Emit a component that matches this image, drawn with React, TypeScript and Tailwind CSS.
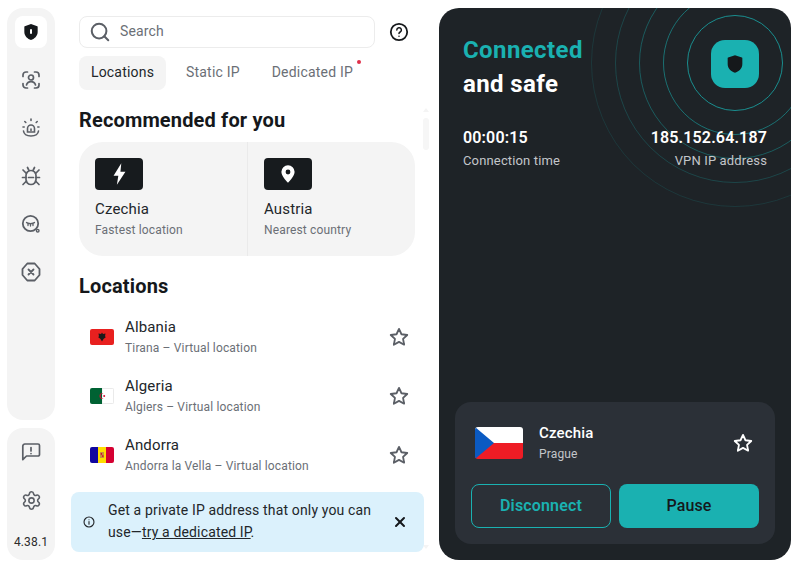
import { Search, Settings, X } from "lucide-react";

function Shield({ className }: { className?: string }) {
  return (
    <svg viewBox="0 0 24 24" className={className} fill="currentColor">
      <path d="M12 2.500 19.500 5c.4.100.5.400.5.800V12c0 5-4 8.300-8 9.600C8 20.300 4 17 4 12V5.800c0-.400.100-.700.500-.800L12 2.500Z" />
    </svg>
  );
}

function StarIcon({ className }: { className?: string }) {
  return (
    <svg viewBox="0 0 24 24" className={className} fill="none" stroke="currentColor" strokeWidth="2" strokeLinejoin="round">
      <path d="m12 3.200 2.700 5.800 6.300.8-4.600 4.300 1.200 6.300L12 17.300l-5.600 3.100 1.200-6.300L3 9.800l6.300-.8L12 3.200Z" />
    </svg>
  );
}

function FaceIcon() {
  return (
    <svg viewBox="0 0 20 20" className="w-5 h-5" fill="none" stroke="currentColor" strokeWidth="1.700" strokeLinecap="round">
      <path d="M2 6.500V5a3 3 0 0 1 3-3h1.500M13.500 2H15a3 3 0 0 1 3 3v1.500M18 13.500V15a3 3 0 0 1-3 3h-1.500M6.500 18H5a3 3 0 0 1-3-3v-1.500" />
      <circle cx="10" cy="7.500" r="2.500" />
      <path d="M5.500 15c.6-2.200 2.400-3.300 4.500-3.300s3.900 1.100 4.500 3.300" />
    </svg>
  );
}

function AlarmIcon() {
  return (
    <svg viewBox="0 0 20 20" className="w-5 h-5" fill="none" stroke="currentColor" strokeWidth="1.600" strokeLinecap="round">
      <path d="M6.500 14v-3.500a3.500 3.500 0 0 1 7 0V14Z" />
      <path d="M10 11v1.500M10 1v1.500M3.800 3.500l1 1M16.200 3.500l-1 1M2 9h1.200M16.800 9H18" />
      <path d="M2.500 13c.4 3 3.500 5 7.500 5s7.100-2 7.500-5" />
    </svg>
  );
}

function BugIcon() {
  return (
    <svg viewBox="0 0 20 20" className="w-5 h-5" fill="none" stroke="currentColor" strokeWidth="1.700" strokeLinecap="round">
      <rect x="5" y="4.500" width="10" height="14" rx="5" />
      <path d="M7.500 11.500h5M6.500 1.500 8 4.500M13.500 1.500 12 4.500M2 4l3.500 3.500M18 4l-3.500 3.500M1.500 11.500H5M18.500 11.500H15M2 18.500l3.500-3.500M18 18.500 14.500 15" />
    </svg>
  );
}

function LeakIcon() {
  return (
    <svg viewBox="0 0 20 20" className="w-5 h-5" fill="none" stroke="currentColor" strokeWidth="1.800" strokeLinecap="round">
      <circle cx="9.500" cy="9.500" r="7.700" />
      <path d="M5.500 8.500c1.200 1.400 6.800 1.400 8 0M7 9.500v2M9.500 10v2M12 9.500v2" strokeWidth="1.300" />
      <circle cx="16.700" cy="16.700" r="1.300" strokeWidth="1.400" />
    </svg>
  );
}

function BlockIcon() {
  return (
    <svg viewBox="0 0 20 20" className="w-5 h-5" fill="none" stroke="currentColor" strokeWidth="1.800" strokeLinecap="round" strokeLinejoin="round">
      <path d="M6.300 1.500h7.400l4.800 5.500v6l-4.800 5.500H6.300L1.500 13V7Z" />
      <path d="m7.500 7.500 5 5M12.500 7.500l-5 5" />
    </svg>
  );
}

function FeedbackIcon() {
  return (
    <svg viewBox="0 0 20 20" className="w-5 h-5" fill="none" stroke="currentColor" strokeWidth="1.700" strokeLinecap="round" strokeLinejoin="round">
      <path d="M4 2h13a1.500 1.500 0 0 1 1.500 1.500v9A1.500 1.500 0 0 1 17 14H5.500l-3.700 3.700V4A2 2 0 0 1 4 2Z" />
      <path d="M10 5.500v3.500M10 11.500v.1" />
    </svg>
  );
}

function AlbaniaFlag() {
  return (
    <svg viewBox="0 0 24 16" className="w-6 h-4 rounded-[2px]">
      <rect width="24" height="16" fill="#e8201f" />
      <path d="M12 3.500 13 5l2.500-.5-.5 3 1 .5-2.500 2-1.500 2.500L10.500 10 8 8l1-.5-.5-3L11 5Z" fill="#1a1a1a" />
    </svg>
  );
}

function AlgeriaFlag() {
  return (
    <svg viewBox="0 0 24 16" className="w-6 h-4 rounded-[2px]">
      <rect width="24" height="16" fill="#fff" />
      <rect x="12" y="0.300" width="11.700" height="15.400" fill="none" stroke="#dcdcdc" strokeWidth="0.600" />
      <rect width="12" height="16" fill="#006233" />
      <path d="M13.500 5.200a3 3 0 1 0 0 5.600 2.400 2.400 0 1 1 0-5.600Z" fill="#d21034" />
      <circle cx="14.200" cy="8" r="1" fill="#d21034" />
    </svg>
  );
}

function AndorraFlag() {
  return (
    <svg viewBox="0 0 24 16" className="w-6 h-4 rounded-[2px]">
      <rect width="8" height="16" fill="#10069f" />
      <rect x="8" width="8" height="16" fill="#fedd00" />
      <rect x="16" width="8" height="16" fill="#d50032" />
      <rect x="10" y="5" width="4" height="6" fill="#c7903f" />
      <rect x="10.800" y="6" width="1.200" height="1.800" fill="#d50032" />
      <rect x="12.200" y="8.200" width="1.200" height="1.800" fill="#d50032" />
    </svg>
  );
}

function CzechFlag() {
  return (
    <svg viewBox="0 0 48 32" className="w-12 h-8 rounded-[3px]">
      <rect width="48" height="16" fill="#fff" />
      <rect y="16" width="48" height="16" fill="#ee1c25" />
      <path d="M0 0 19 16 0 32Z" fill="#0b5ac2" />
    </svg>
  );
}

const locations = [
  { name: "Albania", sub: "Tirana – Virtual location", flag: <AlbaniaFlag /> },
  { name: "Algeria", sub: "Algiers – Virtual location", flag: <AlgeriaFlag /> },
  { name: "Andorra", sub: "Andorra la Vella – Virtual location", flag: <AndorraFlag /> },
];

function Sidebar() {
  return (
    <div className="w-12 flex flex-col gap-2 shrink-0 text-[#5b5f66]">
      <div className="h-[412px] rounded-2xl bg-[#f4f4f4] flex flex-col items-center pt-2 gap-[16px]">
        <div className="w-8 h-8 rounded-lg bg-white flex items-center justify-center text-[#15181b] relative">
          <Shield className="w-5 h-5" />
          <span className="absolute left-[15px] top-[13px] w-[2px] h-[5px] rounded-full bg-white" />
        </div>
        <div className="w-8 h-8 flex items-center justify-center"><FaceIcon /></div>
        <div className="w-8 h-8 flex items-center justify-center"><AlarmIcon /></div>
        <div className="w-8 h-8 flex items-center justify-center"><BugIcon /></div>
        <div className="w-8 h-8 flex items-center justify-center"><LeakIcon /></div>
        <div className="w-8 h-8 flex items-center justify-center"><BlockIcon /></div>
      </div>
      <div className="h-[132px] rounded-2xl bg-[#f4f4f4] flex flex-col items-center pt-[8px]">
        <div className="w-8 h-8 flex items-center justify-center"><FeedbackIcon /></div>
        <div className="w-8 h-8 flex items-center justify-center mt-4"><Settings size={21} strokeWidth={1.8} /></div>
        <span className="text-xs text-[#2b2b2b] mt-[18px] leading-4">4.38.1</span>
      </div>
    </div>
  );
}

function MainColumn() {
  return (
    <div className="relative w-[384px] ml-[8px] h-[566px] -mt-2 shrink-0">
      <div className="h-[566px] overflow-hidden pl-[16px] pr-[32px] pt-4">
        <div className="flex items-center">
          <div className="w-[296px] h-8 rounded-lg border border-[#ececec] flex items-center pl-[9px] text-[#6b6f76]">
            <Search size={22} strokeWidth={2.2} className="text-[#5b5f66]" />
            <span className="text-sm ml-[9px] pb-[2px]">Search</span>
          </div>
          <svg viewBox="0 0 20 20" className="w-5 h-5 ml-[14px]" fill="none" stroke="#15181b" strokeWidth="1.800" strokeLinecap="round">
            <circle cx="10" cy="10" r="8.200" />
            <path d="M7.800 8a2.300 2.300 0 1 1 3.400 2c-.8.500-1.200.9-1.200 1.600M10 14.200v.1" strokeWidth="1.500" />
          </svg>
        </div>
        <div className="flex items-center mt-2 text-sm tracking-[0.2px] text-[#6b6f76] relative">
          <div className="w-[87px] h-[34px] rounded-lg bg-[#f4f4f4] text-[#22262a] flex items-center justify-center pb-[2px]">Locations</div>
          <span className="ml-5 pb-[2px]">Static IP</span>
          <span className="ml-8 pb-[2px] relative">
            Dedicated IP
            <span className="absolute -right-[8px] top-[-2px] w-1 h-1 rounded-full bg-[#e0304a]" />
          </span>
        </div>
        <h2 className="text-xl font-bold text-[#15181b] mt-4 leading-7">Recommended for you</h2>
        <div className="mt-2 w-[336px] h-[114px] rounded-3xl bg-[#f4f4f4] flex">
          <div className="w-[169px] border-r border-[#eaeaea] pt-4 pl-4">
            <div className="w-12 h-8 rounded bg-[#171b1e] flex items-center justify-center text-white">
              <svg viewBox="0 0 16 20" className="w-[19px] h-6" fill="currentColor"><path d="M9.500 1 3 11.500h4L5.800 19 13 8H8.800Z" /></svg>
            </div>
            <div className="text-[15px] text-[#22262a] mt-[9px] leading-5">Czechia</div>
            <div className="text-xs text-[#6b6f76] mt-[2px] leading-[18px]">Fastest location</div>
          </div>
          <div className="flex-1 pt-4 pl-4">
            <div className="w-12 h-8 rounded bg-[#171b1e] flex items-center justify-center text-white">
              <svg viewBox="0 0 16 20" className="w-[18px] h-[22px]" fill="currentColor"><path fillRule="evenodd" d="M8 2a6 6 0 0 1 6 6c0 3.600-3.800 7.600-6 10-2.200-2.400-6-6.400-6-10a6 6 0 0 1 6-6Zm0 4a2.200 2.200 0 1 0 0 4.400A2.200 2.200 0 0 0 8 6Z" /></svg>
            </div>
            <div className="text-[15px] text-[#22262a] mt-[9px] leading-5">Austria</div>
            <div className="text-xs text-[#6b6f76] mt-[2px] leading-[18px]">Nearest country</div>
          </div>
        </div>
        <h2 className="text-xl font-bold text-[#15181b] mt-4 leading-7">Locations</h2>
        <div className="mt-[7px] flex flex-col">
          {locations.map((loc) => (
            <div key={loc.name} className="h-[59px] flex items-center pl-[11px] pr-[5px]">
              <div className="w-6 flex items-center">{loc.flag}</div>
              <div className="ml-[11px] flex-1">
                <div className="text-[15px] text-[#22262a] leading-5">{loc.name}</div>
                <div className="text-xs text-[#6b6f76] leading-[18px] mt-[2px]">{loc.sub}</div>
              </div>
              <StarIcon className="w-[22px] h-[22px] text-[#5b5f66]" />
            </div>
          ))}
        </div>
      </div>

      {/* faint scrollbar */}
      <div className="absolute left-[360px] top-[108px] w-[6px] flex flex-col items-center">
        <div className="w-0 h-0 border-x-[3px] border-x-transparent border-b-[4px] border-b-[#f4f4f4]" />
        <div className="w-[6px] h-[32px] mt-[6px] bg-[#f6f6f6] rounded" />
      </div>
      <div className="absolute left-[360px] top-[545px] w-0 h-0 border-x-[3px] border-x-transparent border-t-[4px] border-t-[#f4f4f4]" />

      <div className="absolute left-[8px] top-[492px] w-[353px] h-[60px] rounded-lg bg-[#dbf1fc] flex items-center pl-3 pr-4">
        <svg viewBox="0 0 14 14" className="w-3 h-3 shrink-0" fill="none" stroke="#22262a" strokeWidth="1.300" strokeLinecap="round">
          <circle cx="7" cy="7" r="5.800" />
          <path d="M7 6.500v3M7 4.300v.1" />
        </svg>
        <div className="ml-[13px] text-sm leading-[22px] text-[#22262a] pb-[2px]">
          <div>Get a private IP address that only you can</div>
          <div>use—<span className="underline">try a dedicated IP</span>.</div>
        </div>
        <X size={16} strokeWidth={3} className="ml-auto text-[#15181b]" />
      </div>
    </div>
  );
}

function StatusPanel() {
  const rings = [
    { r: 47.5, o: 0.75 },
    { r: 71.5, o: 0.55 },
    { r: 95.5, o: 0.4 },
    { r: 119.5, o: 0.25 },
    { r: 143.5, o: 0.15 },
  ];
  return (
    <div className="relative w-[352px] h-[552px] rounded-[20px] bg-[#1e2327] flex flex-col justify-between overflow-hidden">
      <svg className="absolute left-0 top-0 w-[352px] h-[260px]" viewBox="0 0 352 260" fill="none">
        {rings.map((ring) => (
          <circle key={ring.r} cx="296" cy="55" r={ring.r} stroke="#1ab1b1" strokeOpacity={ring.o} />
        ))}
      </svg>
      <div className="absolute left-[272px] top-[32px] w-12 h-12 rounded-[14px] bg-[#1ab1b1] flex items-center justify-center text-[#15181b]">
        <Shield className="w-[22px] h-[22px]" />
      </div>

      <div className="relative pl-6 pr-6 pt-[25px]">
        <div className="text-2xl font-bold text-[#1ab1b1] leading-[34px] tracking-[0.4px]">Connected</div>
        <div className="text-2xl font-bold text-white leading-[35px] tracking-[0.4px]">and safe</div>
        <div className="flex justify-between mt-6">
          <div>
            <div className="text-base font-semibold text-white leading-6">00:00:15</div>
            <div className="text-[13px] text-[#c3c6ca] leading-5 mt-[1px]">Connection time</div>
          </div>
          <div className="text-right">
            <div className="text-base font-semibold text-white leading-6">185.152.64.187</div>
            <div className="text-[13px] text-[#c3c6ca] leading-5 mt-[1px]">VPN IP address</div>
          </div>
        </div>
      </div>

      <div className="relative mx-4 mb-4 h-[142px] rounded-2xl bg-[#2b3037] px-4 pt-[16px]">
        <div className="flex items-center h-[50px] pl-1">
          <CzechFlag />
          <div className="ml-4 flex-1">
            <div className="text-[15px] font-medium text-white leading-5">Czechia</div>
            <div className="text-xs text-[#c3c6ca] leading-[18px] mt-[2px]">Prague</div>
          </div>
          <StarIcon className="w-[22px] h-[22px] text-white mr-[5px]" />
        </div>
        <div className="flex gap-2 mt-[16px]">
          <button type="button" className="w-[140px] h-11 rounded-lg border border-[#1ab1b1] text-[#1ab1b1] text-base font-semibold">Disconnect</button>
          <button type="button" className="w-[140px] h-11 rounded-lg bg-[#1ab1b1] text-[#15181b] text-base font-medium">Pause</button>
        </div>
      </div>
    </div>
  );
}

export default function App() {
  return (
    <div className="w-[799px] h-[566px] bg-white overflow-hidden font-['Roboto',sans-serif] tracking-[0.15px]">
      <div className="flex pl-[7px] pt-2">
        <Sidebar />
        <MainColumn />
        <div className="-ml-[8px]"><StatusPanel /></div>
      </div>
    </div>
  );
}
